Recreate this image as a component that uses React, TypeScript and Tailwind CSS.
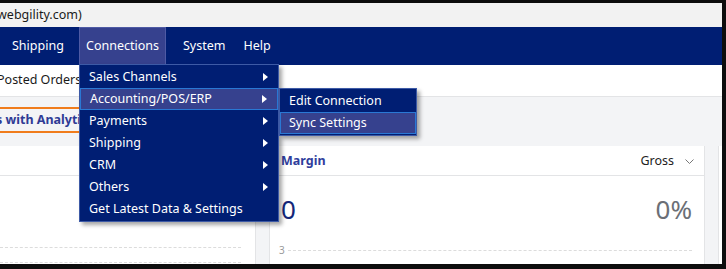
const menuItems = [
  { label: "Sales Channels", sub: true },
  { label: "Accounting/POS/ERP", sub: true, active: true },
  { label: "Payments", sub: true },
  { label: "Shipping", sub: true },
  { label: "CRM", sub: true },
  { label: "Others", sub: true },
  { label: "Get Latest Data & Settings", sub: false },
];

const Arrow = () => (
  <svg width="5" height="8" viewBox="0 0 5 8" className="fill-white">
    <path d="M0 0 L5 4 L0 8 Z" />
  </svg>
);

export default function App() {
  return (
    <div className="w-[726px] h-[269px] bg-[#0d0d0d] pt-[3px] pr-[4px] pb-[5px] overflow-hidden">
      <div
        className="relative h-full bg-[#f3f4f6] flex flex-col overflow-hidden"
        style={{ fontFamily: '"Noto Sans", "DejaVu Sans", sans-serif' }}
      >
        <div className="h-[24px] shrink-0 bg-[#f2f2f2] flex items-center text-[12.5px] text-[#1a1a1a] -ml-[3px]">
          webgility.com)
        </div>

        <div className="h-[38px] shrink-0 bg-[#001e73] flex items-stretch text-[12.5px] text-white">
          <div className="w-[79px] flex items-center pl-[12px]">Shipping</div>
          <div className="w-[87px] flex items-center justify-center bg-[#36418e] border-x border-t border-[#4e5aa4]">
            Connections
          </div>
          <div className="flex items-center pl-[17px]">System</div>
          <div className="flex items-center pl-[18px]">Help</div>
        </div>

        <div className="h-[32px] shrink-0 bg-white border-b border-[#e3e4e6] flex items-center text-[12.5px] text-[#1a1a1a] -ml-[3px]">
          Posted Orders
        </div>

        <div className="mt-[10px] w-[220px] h-[26px] shrink-0 border-y-2 border-[#f07c1c] flex items-center -ml-[4px] text-[12.5px] font-bold text-[#2e3b95]">
          s with Analytics
        </div>

        <div className="mt-[13px] flex gap-[13px] flex-1 min-h-0">
          <div className="w-[256px] shrink-0 bg-white border-r border-[#e3e4e6] flex flex-col">
            <div className="h-[30px] shrink-0 border-b border-[#e3e4e6]" />
            <div className="flex-1" />
            <div className="border-t border-dashed border-[#dcdcdc] mr-[14px]" />
            <div className="border-t border-dashed border-[#dcdcdc] mt-[14px] mb-[1px] mr-[14px]" />
          </div>

          <div className="w-[436px] shrink-0 bg-white border-x border-[#e3e4e6] flex flex-col">
            <div className="h-[30px] shrink-0 border-b border-[#e3e4e6] flex items-center justify-between pl-[11px] pr-[10px] pt-[2px]">
              <span className="text-[12.5px] font-bold text-[#2f3d9c]">Margin</span>
              <span className="flex items-center gap-[11px] text-[12.5px] text-[#222]">
                Gross
                <svg width="9" height="6" viewBox="0 0 9 6" fill="none" stroke="#777" strokeWidth="1">
                  <path d="M0.5 0.5 L4.5 4.5 L8.5 0.5" />
                </svg>
              </span>
            </div>
            <div className="flex items-center justify-between pl-[11px] pr-[12px] pt-[20px]">
              <span className="text-[26px] leading-none text-[#14277a]">0</span>
              <span className="text-[26px] leading-none text-[#6b6f76]">0%</span>
            </div>
            <div className="flex items-center pl-[9px] pr-[12px] mt-[23px] gap-[3px]">
              <span className="text-[10px] text-[#9a9a9a] leading-none">3</span>
              <div className="flex-1 border-t border-dashed border-[#dcdcdc]" />
            </div>
            <div className="ml-[16px] mr-[12px] mt-[12px] border-t border-dashed border-[#dcdcdc]" />
          </div>

          <div className="flex-1 bg-white border-l border-[#e3e4e6]" />
        </div>

        <div className="absolute left-[79px] top-[61px] w-[200px] bg-[#001e73] border border-[#3d5aa6] shadow-[3px_3px_4px_rgba(0,0,0,0.35)] py-[1px] text-[12.5px] text-white">
          {menuItems.map((m) => (
            <div
              key={m.label}
              className={`h-[22px] flex items-center justify-between pl-[9px] pr-[10px] ${
                m.active ? "bg-[#36418e] border border-[#2a78d4] pl-[8px] pr-[9px]" : ""
              }`}
            >
              <span>{m.label}</span>
              {m.sub && <Arrow />}
            </div>
          ))}
        </div>

        <div className="absolute left-[279px] top-[85px] w-[138px] bg-[#001e73] border border-[#3d5aa6] shadow-[3px_3px_4px_rgba(0,0,0,0.35)] py-[1px] text-[12.5px] text-white">
          <div className="h-[22px] flex items-center pl-[9px]">Edit Connection</div>
          <div className="h-[22px] flex items-center pl-[8px] bg-[#36418e] border border-[#2a78d4]">
            Sync Settings
          </div>
        </div>
      </div>
    </div>
  );
}
